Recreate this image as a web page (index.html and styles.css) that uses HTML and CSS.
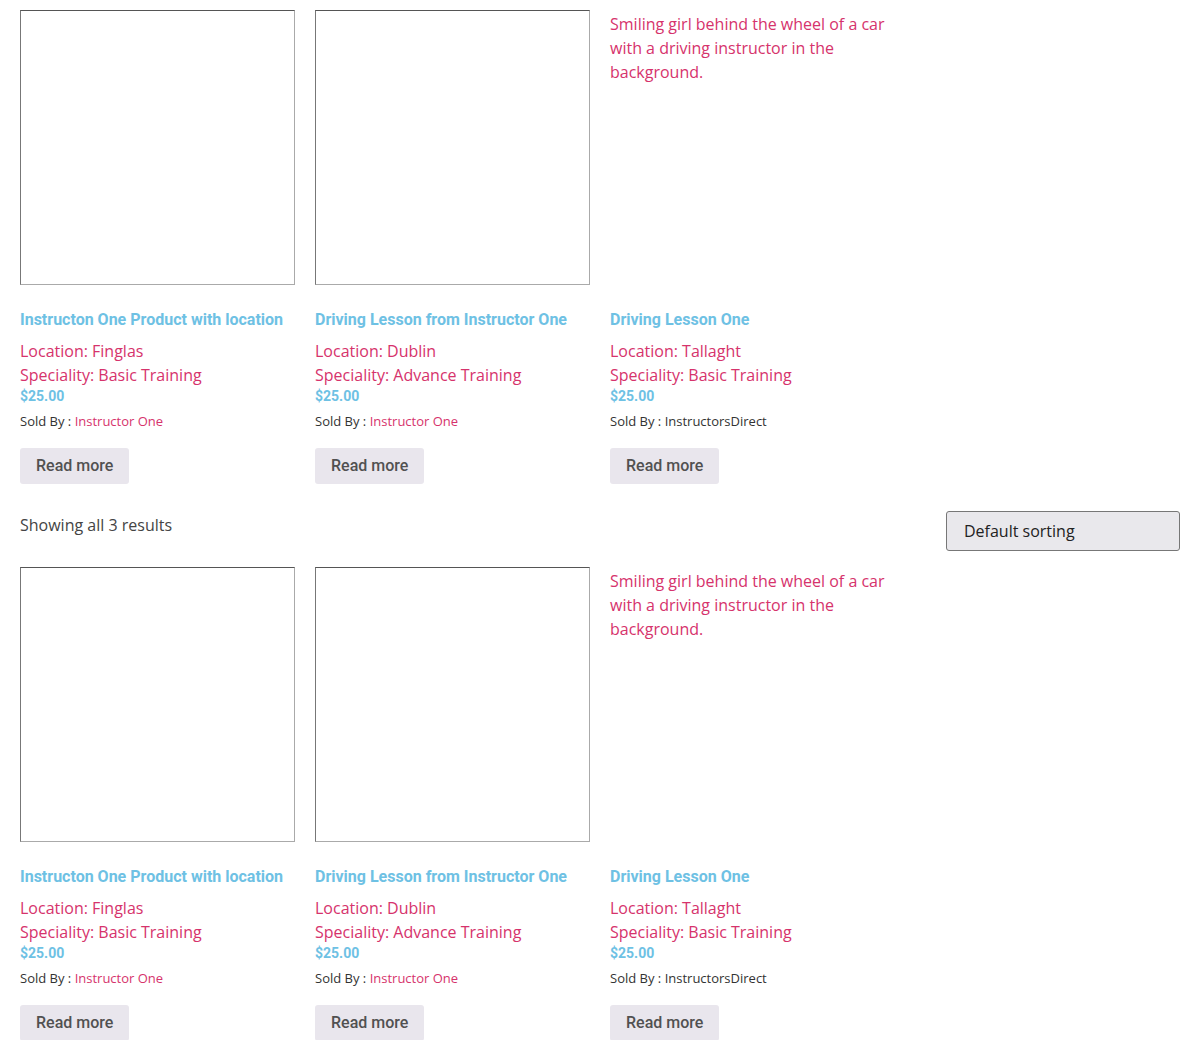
FILE: index.html
```html
<!DOCTYPE html>
<html lang="en">
<head>
<meta charset="utf-8">
<title>Driving lessons</title>
<link rel="stylesheet" href="styles.css">
</head>
<body>
<main class="shop">
  <ul class="products">
    <li class="product">
      <a class="product-link" href="#">
        <span class="thumb thumb-empty"></span>
        <h2 class="title">Instructon One Product with location</h2>
        <span class="meta">Location: Finglas</span>
        <span class="meta">Speciality: Basic Training</span>
        <span class="price">$25.00</span>
      </a>
      <p class="seller">Sold By : <a href="#">Instructor One</a></p>
      <a class="button" href="#">Read more</a>
    </li>
    <li class="product">
      <a class="product-link" href="#">
        <span class="thumb thumb-empty"></span>
        <h2 class="title">Driving Lesson from Instructor One</h2>
        <span class="meta">Location: Dublin</span>
        <span class="meta">Speciality: Advance Training</span>
        <span class="price">$25.00</span>
      </a>
      <p class="seller">Sold By : <a href="#">Instructor One</a></p>
      <a class="button" href="#">Read more</a>
    </li>
    <li class="product">
      <a class="product-link" href="#">
        <span class="thumb">Smiling girl behind the wheel of a car with a driving instructor in the background.</span>
        <h2 class="title">Driving Lesson One</h2>
        <span class="meta">Location: Tallaght</span>
        <span class="meta">Speciality: Basic Training</span>
        <span class="price">$25.00</span>
      </a>
      <p class="seller">Sold By : InstructorsDirect</p>
      <a class="button" href="#">Read more</a>
    </li>
  </ul>
  <div class="toolbar">
    <p class="count">Showing all 3 results</p>
    <select class="sorting" aria-label="Shop order">
      <option>Default sorting</option>
      <option>Sort by popularity</option>
      <option>Sort by latest</option>
    </select>
  </div>
  <ul class="products">
    <li class="product">
      <a class="product-link" href="#">
        <span class="thumb thumb-empty"></span>
        <h2 class="title">Instructon One Product with location</h2>
        <span class="meta">Location: Finglas</span>
        <span class="meta">Speciality: Basic Training</span>
        <span class="price">$25.00</span>
      </a>
      <p class="seller">Sold By : <a href="#">Instructor One</a></p>
      <a class="button" href="#">Read more</a>
    </li>
    <li class="product">
      <a class="product-link" href="#">
        <span class="thumb thumb-empty"></span>
        <h2 class="title">Driving Lesson from Instructor One</h2>
        <span class="meta">Location: Dublin</span>
        <span class="meta">Speciality: Advance Training</span>
        <span class="price">$25.00</span>
      </a>
      <p class="seller">Sold By : <a href="#">Instructor One</a></p>
      <a class="button" href="#">Read more</a>
    </li>
    <li class="product">
      <a class="product-link" href="#">
        <span class="thumb">Smiling girl behind the wheel of a car with a driving instructor in the background.</span>
        <h2 class="title">Driving Lesson One</h2>
        <span class="meta">Location: Tallaght</span>
        <span class="meta">Speciality: Basic Training</span>
        <span class="price">$25.00</span>
      </a>
      <p class="seller">Sold By : InstructorsDirect</p>
      <a class="button" href="#">Read more</a>
    </li>
  </ul>
</main>
</body>
</html>
```
FILE: styles.css
```css
* { box-sizing: border-box; }

html { scrollbar-width: none; }

body {
  margin: 0;
  background: #fff;
  color: #444;
  font: 16px/24px "Open Sans", "Noto Sans", sans-serif;
}

a {
  color: #d6336c;
  text-decoration: none;
}

.shop { padding: 10px 20px; }

.products {
  display: grid;
  grid-template-columns: repeat(4, 1fr);
  gap: 20px;
  margin: 0;
  padding: 0;
  list-style: none;
}

.product-link { display: block; }

.thumb {
  display: block;
  aspect-ratio: 1;
  padding-top: 2px;
}

.thumb-empty {
  border: 1px solid;
  border-color: #555 #aaa #aaa #777;
}

.title {
  margin: 0;
  padding: 24px 0 8px;
  color: #6ec1e4;
  font: 700 16px/22px Roboto, sans-serif;
  white-space: nowrap;
}

.meta { display: block; }

.price {
  display: block;
  color: #6ec1e4;
  font: 700 14px/18px Roboto, sans-serif;
}

.seller {
  margin: 5px 0 16px;
  color: #333;
  font-size: 13px;
  line-height: 22px;
}

.button {
  display: inline-block;
  padding: 10px 16px;
  border-radius: 3px;
  background: #e9e6ed;
  color: #515151;
  font: 500 16px/16px Roboto, sans-serif;
}

.toolbar {
  display: flex;
  justify-content: space-between;
  align-items: flex-start;
  margin: 27px 0 16px;
}

.count {
  margin: 0;
  line-height: 28px;
}

.sorting {
  appearance: none;
  width: 234px;
  height: 40px;
  padding: 0 17px;
  border: 1px solid #777;
  border-radius: 3px;
  background: #e9e8ec;
  color: #222;
  font: inherit;
}
```
